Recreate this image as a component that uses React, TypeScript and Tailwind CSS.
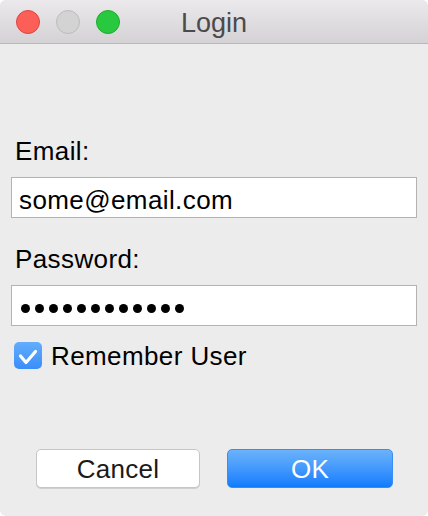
import React from "react";

const font = { fontFamily: '"Liberation Sans", Arial, sans-serif' };

const TrafficLights = () => (
  <div className="flex gap-[16px] pl-[16px] pt-[10px]">
    <div className="w-[24px] h-[24px] rounded-full bg-[#fc5f57] border border-[#e0443e]" />
    <div className="w-[24px] h-[24px] rounded-full bg-[#d4d3d4] border border-[#bdbcbd]" />
    <div className="w-[24px] h-[24px] rounded-full bg-[#28c83f] border border-[#1dad2b]" />
  </div>
);

export default function App() {
  return (
    <div className="w-[428px] h-[516px] bg-white" style={font}>
      <div className="w-full h-full rounded-[6px] overflow-hidden bg-[#ececec] flex flex-col">
        {/* Title bar */}
        <div className="relative h-[44px] border-b border-[#b9b8b9] bg-gradient-to-b from-[#ebe9eb] to-[#d4d2d4]">
          <TrafficLights />
          <div className="absolute inset-0 flex justify-center pt-[2px] text-[27px] leading-[43px] text-[#4b4b4b]">
            Login
          </div>
        </div>

        {/* Form */}
        <div className="flex flex-col px-[11px] pt-[94px] text-[26px] leading-[26px] tracking-[0.4px] text-black">
          <label className="pl-[4px]">Email:</label>
          <div className="mt-[13px] h-[41px] w-[406px] bg-white border border-[#b3b3b3] pl-[7px] pt-[9px]">
            some@email.com
          </div>

          <label className="pl-[4px] mt-[28px]">Password:</label>
          <div className="mt-[13px] h-[41px] w-[406px] bg-white border border-[#b3b3b3] pl-[9px] flex items-center gap-[5px] pt-[6px]">
            {Array.from({ length: 12 }).map((_, i) => (
              <div key={i} className="w-[9px] h-[9px] rounded-full bg-black" />
            ))}
          </div>

          <div className="mt-[16px] flex items-center gap-[9px] pl-[3px]">
            <div className="w-[28px] h-[27px] rounded-[5px] bg-gradient-to-b from-[#62adfd] to-[#3a8ef9] flex items-center justify-center">
              <svg width="28" height="27" viewBox="0 0 28 27">
                <polyline
                  points="6.5,14 12,20.5 21.5,9.5"
                  fill="none"
                  stroke="white"
                  strokeWidth="3.2"
                  strokeLinecap="round"
                  strokeLinejoin="round"
                />
              </svg>
            </div>
            <span className="pt-[1px]">Remember User</span>
          </div>
        </div>

        {/* Buttons */}
        <div className="mt-[80px] flex gap-[27px] pl-[36px] text-[26px] tracking-[0.3px]">
          <button className="w-[164px] h-[39px] rounded-[5px] bg-white border border-[#c6c6c6] shadow-[0_1px_0_rgba(0,0,0,0.12)] text-[#1a1a1a]">
            Cancel
          </button>
          <button className="w-[166px] h-[39px] rounded-[5px] bg-gradient-to-b from-[#6ab3fb] to-[#0c7cfd] border border-[#3b8cf3] text-white">
            OK
          </button>
        </div>
      </div>
    </div>
  );
}
